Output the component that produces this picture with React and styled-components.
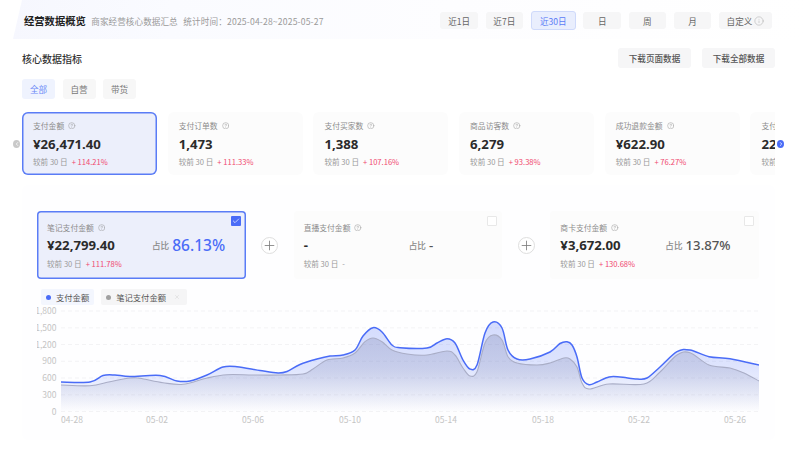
import React from "react";
import styled, { createGlobalStyle } from "styled-components";
import { Check, ChevronLeft, ChevronRight, CircleHelp, Info, Plus, X } from "lucide-react";

const GlobalStyle = createGlobalStyle`
  html, body {
    margin: 0;
    padding: 0;
    background: #ffffff;
    font-family: "Noto Sans CJK SC", "Noto Sans", sans-serif;
  }
  * {
    box-sizing: border-box;
  }
`;

const timeRanges = ["近1日", "近7日", "近30日", "日", "周", "月"];

const metrics = [
  { title: "支付金额", value: "¥26,471.40", rate: "114.21%", active: true },
  { title: "支付订单数", value: "1,473", rate: "111.33%" },
  { title: "支付买家数", value: "1,388", rate: "107.16%" },
  { title: "商品访客数", value: "6,279", rate: "93.38%" },
  { title: "成功退款金额", value: "¥622.90", rate: "76.27%" },
  { title: "支付件数", value: "22,510", rate: "88.10%" },
];

const blueLine = [
  [61, 382], [90, 382], [103, 375.5], [115, 375], [130, 376.5], [160, 375.5], [177, 381], [190, 381],
  [207, 375], [223, 367], [237, 366.7], [260, 370.5], [278, 373], [287, 371.5], [300, 364.5], [317, 359],
  [330, 356], [343, 355], [355, 350], [363, 336], [373, 327.7], [382, 332], [392, 345], [400, 347.7],
  [427, 348], [437, 343], [447, 338.7], [455, 343], [463, 360], [470, 369], [477, 365], [485, 333],
  [493, 322], [502, 328], [508, 350], [517, 359], [530, 359], [550, 352], [560, 343.5], [567, 341.7],
  [572, 345], [577, 357], [582, 378], [589, 384.7], [597, 382], [609, 377], [620, 377], [637, 379],
  [647, 378], [660, 367], [677, 351.7], [690, 350], [709, 356.7], [730, 358.7], [759, 365],
];

const grayLine = [
  [61, 385], [90, 385.7], [110, 381.7], [130, 378], [140, 378.3], [163, 382.7], [183, 384.3], [207, 378],
  [227, 374.7], [253, 375], [280, 375], [303, 374], [313, 369], [327, 360], [343, 358], [355, 353],
  [365, 341.7], [373, 338], [382, 341.7], [392, 350], [407, 354], [427, 355], [447, 351], [455, 355],
  [463, 368], [470, 376], [477, 371.7], [485, 343], [493, 335], [502, 340], [508, 356.7], [517, 363],
  [537, 365], [550, 363], [564, 358], [570, 359], [577, 367], [582, 383], [589, 389], [609, 384],
  [644, 384], [660, 372], [677, 355], [690, 352.7], [709, 365], [730, 368], [744, 373], [759, 381],
];

const yTicks = [
  ["1,800", 311],
  ["1,500", 327.8],
  ["1,200", 344.5],
  ["900", 361.3],
  ["600", 378],
  ["300", 394.8],
  ["0", 411.5],
];

const xTicks = [
  ["04-28", 72],
  ["05-02", 157],
  ["05-06", 253],
  ["05-10", 350],
  ["05-14", 446],
  ["05-18", 543],
  ["05-22", 639],
  ["05-26", 735],
];

// catmull-rom through the sampled points
const smooth = (pts) => {
  let d = `M${pts[0][0]} ${pts[0][1]}`;
  for (let i = 0; i < pts.length - 1; i++) {
    const p0 = pts[i - 1] || pts[i];
    const p1 = pts[i];
    const p2 = pts[i + 1];
    const p3 = pts[i + 2] || p2;
    const c1x = p1[0] + (p2[0] - p0[0]) / 6;
    const c1y = p1[1] + (p2[1] - p0[1]) / 6;
    const c2x = p2[0] - (p3[0] - p1[0]) / 6;
    const c2y = p2[1] - (p3[1] - p1[1]) / 6;
    d += ` C${c1x} ${c1y} ${c2x} ${c2y} ${p2[0]} ${p2[1]}`;
  }
  return d;
};

const TrendChart = () => {
  const blue = smooth(blueLine);
  const gray = smooth(grayLine);
  return (
    <ChartSvg viewBox="37 305 722 125" width="722" height="125">
      <defs>
        <linearGradient id="blueFill" gradientUnits="userSpaceOnUse" x1="0" y1="322" x2="0" y2="412">
          <stop offset="0" stopColor="#4d6ef5" stopOpacity="0.24" />
          <stop offset="0.5" stopColor="#4d6ef5" stopOpacity="0.18" />
          <stop offset="1" stopColor="#4d6ef5" stopOpacity="0" />
        </linearGradient>
        <linearGradient id="grayFill" gradientUnits="userSpaceOnUse" x1="0" y1="335" x2="0" y2="412">
          <stop offset="0" stopColor="#6a72a0" stopOpacity="0.26" />
          <stop offset="0.5" stopColor="#6a72a0" stopOpacity="0.18" />
          <stop offset="1" stopColor="#6a72a0" stopOpacity="0" />
        </linearGradient>
      </defs>
      {yTicks.map(([label, y]) => (
        <g key={label}>
          <line x1="61" x2="759" y1={y} y2={y} stroke="#f0f0f2" strokeWidth="0.8" strokeDasharray="4 3" />
          <AxisText x="56.5" y={y + 3} textAnchor="end">
            {label}
          </AxisText>
        </g>
      ))}
      {xTicks.map(([label, x]) => (
        <AxisText key={label} x={x} y="423" textAnchor="middle">
          {label}
        </AxisText>
      ))}
      <path d={`${blue} L759 412 L61 412 Z`} fill="url(#blueFill)" />
      <path d={`${gray} L759 412 L61 412 Z`} fill="url(#grayFill)" />
      <path d={gray} fill="none" stroke="#a9adc6" strokeWidth="1.1" />
      <path d={blue} fill="none" stroke="#4a6cf7" strokeWidth="1.5" />
    </ChartSvg>
  );
};

const Help = () => <HelpIcon size={7.5} strokeWidth={1.4} />;

const Compare = ({ rate }) => (
  <CompareRow>
    <span>较前 30 日</span>
    <Rate>+ {rate}</Rate>
  </CompareRow>
);

const ChannelCard = ({ title, value, share, rate, active, big }) => (
  <Channel $active={active}>
    <CheckMark $active={active}>{active && <Check size={8} color="#fff" strokeWidth={2} />}</CheckMark>
    <CardTitle>
      {title} <Help />
    </CardTitle>
    <ChannelMain>
      <ChannelValue>{value}</ChannelValue>
      <Share>
        <ShareLabel>占比</ShareLabel>
        <ShareValue $active={active} $big={big}>
          {share}
        </ShareValue>
      </Share>
    </ChannelMain>
    {rate ? (
      <Compare rate={rate} />
    ) : (
      <CompareRow>
        <span>较前 30 日</span>
        <span>-</span>
      </CompareRow>
    )}
  </Channel>
);

const App = () => {
  return (
    <Page>
      <GlobalStyle />
      <Header>
        <TitleGroup>
          <Title>经营数据概览</Title>
          <Subtitle>商家经营核心数据汇总</Subtitle>
          <Subtitle $wide>统计时间：2025-04-28~2025-05-27</Subtitle>
        </TitleGroup>
        <RangeGroup>
          {timeRanges.map((r) => (
            <RangeButton key={r} $active={r === "近30日"}>
              {r}
            </RangeButton>
          ))}
          <CustomButton>
            自定义 <Info size={10} strokeWidth={1} color="#999" />
          </CustomButton>
        </RangeGroup>
      </Header>

      <Content>
        <SectionHead>
          <SectionTitle>核心数据指标</SectionTitle>
          <Downloads>
            <DownloadButton>下载页面数据</DownloadButton>
            <DownloadButton>下载全部数据</DownloadButton>
          </Downloads>
        </SectionHead>

        <Tabs>
          <Tab $active>全部</Tab>
          <Tab>自营</Tab>
          <Tab>带货</Tab>
        </Tabs>

        <MetricWrap>
          <Arrow $side="left">
            <ChevronLeft size={6} color="#fff" strokeWidth={3} />
          </Arrow>
          <MetricRow>
            {metrics.map((m) => (
              <MetricCard key={m.title} $active={m.active}>
                <CardTitle>
                  {m.title} <Help />
                </CardTitle>
                <MetricValue>{m.value}</MetricValue>
                <Compare rate={m.rate} />
              </MetricCard>
            ))}
          </MetricRow>
          <Arrow $side="right">
            <ChevronRight size={6} color="#fff" strokeWidth={3} />
          </Arrow>
        </MetricWrap>

        <Panel>
          <ChannelRow>
            <ChannelCard title="笔记支付金额" value="¥22,799.40" share="86.13%" rate="111.78%" active big />
            <PlusSlot>
              <PlusCircle>
                <Plus size={15} strokeWidth={1.3} />
              </PlusCircle>
            </PlusSlot>
            <ChannelCard title="直播支付金额" value="-" share="-" />
            <PlusSlot>
              <PlusCircle>
                <Plus size={15} strokeWidth={1.3} />
              </PlusCircle>
            </PlusSlot>
            <ChannelCard title="商卡支付金额" value="¥3,672.00" share="13.87%" rate="130.68%" />
          </ChannelRow>

          <Legend>
            <LegendChip $blue>
              <Dot $color="#4a6cf7" />
              支付金额
            </LegendChip>
            <LegendChip $closable>
              <Dot $color="#a0a0a0" />
              笔记支付金额
              <CloseIcon size={6} color="#c8c8c8" strokeWidth={1.5} />
            </LegendChip>
          </Legend>

          <TrendChart />
        </Panel>
      </Content>
    </Page>
  );
};

const Page = styled.div`
  width: 807px;
  height: 455px;
  overflow: hidden;
  background: #fff;
  color: #262626;
`;

const Header = styled.div`
  height: 39px;
  margin-left: 13px;
  padding: 2px 35px 0 11px;
  display: flex;
  align-items: center;
  justify-content: space-between;
  background: linear-gradient(95deg, #f6f7fe 0%, #fafbff 20%, #fdfdff 55%, #ffffff 100%);
  clip-path: polygon(9px 0, 100% 0, 100% 100%, 0 100%);
`;

const TitleGroup = styled.div`
  display: flex;
  align-items: center;
  gap: 5.5px;
`;

const Title = styled.div`
  font-size: 10.3px;
  font-weight: 700;
  color: #222;
`;

const Subtitle = styled.div`
  font-size: 8.6px;
  color: #9a9a9a;
  letter-spacing: ${(p) => (p.$wide ? "0.17px" : "0.05px")};
`;

const RangeGroup = styled.div`
  display: flex;
  align-items: center;
  gap: 7.7px;
`;

const RangeButton = styled.div`
  width: ${(p) => (p.$active ? "45px" : "37.5px")};
  height: ${(p) => (p.$active ? "19px" : "17px")};
  display: flex;
  align-items: center;
  justify-content: center;
  font-size: 8.6px;
  border-radius: 3px;
  color: ${(p) => (p.$active ? "#5b7cf6" : "#666")};
  background: ${(p) => (p.$active ? "#e9eefd" : "#f6f6f7")};
  border: ${(p) => (p.$active ? "1px solid #cfdafb" : "none")};
`;

const CustomButton = styled(RangeButton)`
  width: 53px;
  gap: 2px;
`;

const Content = styled.div`
  padding: 9px 32px 0 22px;
`;

const SectionHead = styled.div`
  display: flex;
  align-items: center;
  justify-content: space-between;
  height: 20px;
`;

const SectionTitle = styled.div`
  font-size: 10px;
  font-weight: 500;
  color: #333;
`;

const Downloads = styled.div`
  display: flex;
  gap: 11px;
`;

const DownloadButton = styled.div`
  width: 73px;
  height: 20px;
  display: flex;
  align-items: center;
  justify-content: center;
  font-size: 8.6px;
  font-weight: 500;
  color: #555;
  background: #f6f6f7;
  border-radius: 3px;
`;

const Tabs = styled.div`
  display: flex;
  gap: 7.5px;
  margin-top: 11px;
`;

const Tab = styled.div`
  width: 33px;
  height: 20px;
  display: flex;
  align-items: center;
  justify-content: center;
  font-size: 8.6px;
  border-radius: 3px;
  color: ${(p) => (p.$active ? "#6c8af7" : "#777")};
  background: ${(p) => (p.$active ? "#eff3fe" : "#f7f7f7")};
`;

const MetricWrap = styled.div`
  position: relative;
  margin-top: 13px;
  width: 753px;
`;

const MetricRow = styled.div`
  display: flex;
  gap: 10.7px;
  overflow: hidden;
`;

const MetricCard = styled.div`
  flex: none;
  width: 135px;
  height: 63px;
  padding: 8px 11px 0;
  border-radius: 6px;
  background: ${(p) => (p.$active ? "#eceffb" : "#fcfcfc")};
  box-shadow: ${(p) => (p.$active ? "inset 0 0 0 1.5px #5a7cf6" : "none")};
`;

const CardTitle = styled.div`
  display: flex;
  align-items: center;
  gap: 4px;
  height: 11px;
  font-size: 7.8px;
  color: #8c8c8c;
`;

const HelpIcon = styled(CircleHelp)`
  color: #8c8c8c;
  flex: none;
`;

const MetricValue = styled.div`
  margin-top: 3px;
  height: 20px;
  line-height: 20px;
  font-family: "Noto Sans", "Noto Sans CJK SC", sans-serif;
  font-size: 13.2px;
  font-weight: 700;
  white-space: nowrap;
  color: #2b2b2b;
`;

const CompareRow = styled.div`
  display: flex;
  align-items: center;
  gap: 4px;
  margin-top: 1px;
  height: 12px;
  font-size: 7.6px;
  color: #9a9a9a;
`;

const Rate = styled.span`
  color: #f0486f;
`;

const Arrow = styled.div`
  position: absolute;
  top: 28px;
  left: ${(p) => (p.$side === "left" ? "-9px" : "755px")};
  width: 7px;
  height: 8px;
  border-radius: 50%;
  display: flex;
  align-items: center;
  justify-content: center;
  background: ${(p) => (p.$side === "left" ? "#c9c9c9" : "#4a6cf7")};
`;

const Panel = styled.div`
  margin-top: 10px;
  width: 753px;
  height: 255px;
  padding: 26px 16px 0 15px;
  background: #fefeff;
  border-radius: 6px;
`;

const ChannelRow = styled.div`
  display: flex;
  align-items: stretch;
`;

const Channel = styled.div`
  position: relative;
  flex: 1;
  height: 68px;
  padding: 11px 10px 0;
  border-radius: 4px;
  background: ${(p) => (p.$active ? "#eceffb" : "#fcfcfc")};
  box-shadow: ${(p) => (p.$active ? "inset 0 0 0 1.5px #5a7cf6" : "none")};
`;

const CheckMark = styled.div`
  position: absolute;
  top: 5px;
  right: 5px;
  width: 10px;
  height: 10px;
  display: flex;
  align-items: center;
  justify-content: center;
  border-radius: 1px;
  background: ${(p) => (p.$active ? "#4a6cf7" : "#fff")};
  border: ${(p) => (p.$active ? "none" : "1px solid #e8e8e8")};
`;

const ChannelMain = styled.div`
  display: flex;
  align-items: center;
  margin-top: 1px;
  height: 22px;
`;

const ChannelValue = styled.div`
  width: 105px;
  font-family: "Noto Sans", "Noto Sans CJK SC", sans-serif;
  font-size: 13.2px;
  font-weight: 700;
  color: #2b2b2b;
`;

const Share = styled.div`
  display: flex;
  align-items: center;
  gap: 3px;
`;

const ShareLabel = styled.span`
  font-size: 8.6px;
  font-weight: 500;
  color: #8a8a8a;
`;

const ShareValue = styled.span`
  font-family: "Noto Sans", "Noto Sans CJK SC", sans-serif;
  font-size: ${(p) => (p.$big ? "15.5px" : "13.2px")};
  font-weight: 500;
  color: ${(p) => (p.$active ? "#4a6cf7" : "#555")};
`;

const PlusSlot = styled.div`
  flex: none;
  width: 48px;
  display: flex;
  align-items: center;
  justify-content: center;
`;

const PlusCircle = styled.div`
  width: 17px;
  height: 17px;
  display: flex;
  align-items: center;
  justify-content: center;
  border-radius: 50%;
  border: 1.2px solid #dedede;
  color: #7a7a7a;
  background: #fff;
`;

const Legend = styled.div`
  display: flex;
  gap: 7px;
  margin-top: 10px;
  margin-left: 4px;
`;

const LegendChip = styled.div`
  height: 16px;
  padding: ${(p) => (p.$closable ? "0 7px 0 5px" : "0 5px")};
  display: flex;
  align-items: center;
  gap: 5px;
  font-size: 8.3px;
  border-radius: 2px;
  color: #555;
  background: ${(p) => (p.$blue ? "#f3f6fe" : "#f5f5f6")};
`;

const CloseIcon = styled(X)`
  margin-left: 3px;
`;

const Dot = styled.span`
  width: 5px;
  height: 5px;
  border-radius: 50%;
  background: ${(p) => p.$color};
`;

const ChartSvg = styled.svg`
  display: block;
`;

const AxisText = styled.text`
  font-size: 8.5px;
  fill: #c4c4c4;
`;

export default App;
